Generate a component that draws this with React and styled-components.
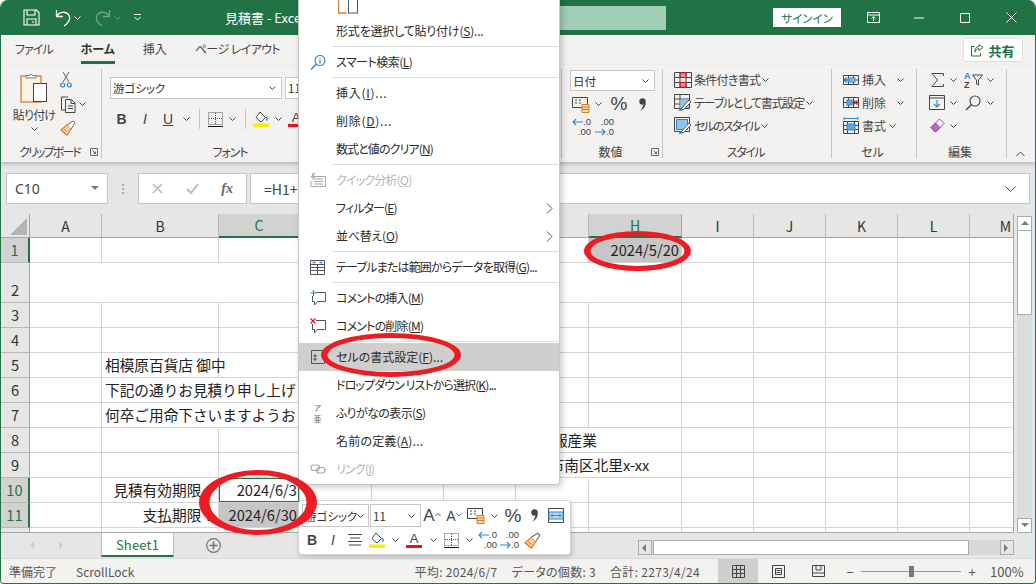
import React from 'react'
import styled, { createGlobalStyle } from 'styled-components'

const GlobalStyle = createGlobalStyle`
  html, body { margin: 0; padding: 0; background: #fff; }
  body { font-family: "Noto Sans CJK JP", "Noto Sans", sans-serif; }
  * { box-sizing: border-box; }
`

const GREEN = '#217346'
const INK = '#444'
const BLUE = '#2b88d8'
const ORANGE = '#d67f24'
const RED = '#e81123'

const Win = styled.div`
  position: relative;
  width: 1036px;
  height: 584px;
  border: 1px solid ${GREEN};
  border-top: 0;
  border-radius: 8px 8px 4px 4px;
  overflow: hidden;
  display: flex;
  flex-direction: column;
  background: #e6e6e6;
`

/* title bar */
const TitleBar = styled.div`
  flex: none;
  height: 35px;
  background: ${GREEN};
  color: #fff;
  display: flex;
  align-items: center;
  font-size: 13px;
`
const Qat = styled.div`
  display: flex;
  align-items: center;
  width: 224px;
  padding-left: 20px;
`
const QatBtn = styled.span`
  display: flex;
  align-items: center;
  justify-content: center;
  gap: 3px;
  width: ${p => p.$w}px;
  margin-left: ${p => p.$ml || 0}px;
`
const DocTitle = styled.span`
  width: 315px;
  white-space: nowrap;
`
const SearchBox = styled.div`
  width: 126px;
  height: 24px;
  background: #a0cdb5;
`
const SignIn = styled.span`
  width: 68px;
  height: 19px;
  margin-left: 107px;
  margin-right: 9px;
  background: #fff;
  color: ${GREEN};
  font-size: 11.5px;
  font-feature-settings: "palt";
  display: flex;
  align-items: center;
  justify-content: center;
`
const WinBtn = styled.span`
  width: 46px;
  display: flex;
  justify-content: center;
`

/* tab row */
const TabRow = styled.div`
  flex: none;
  height: 30px;
  background: #f3f2f1;
  display: flex;
  align-items: center;
  padding-left: 14px;
  gap: 28px;
  font-size: 12px;
  font-feature-settings: "palt";
  color: ${INK};
`
const Tab = styled.span`
  height: 28px;
  padding-top: 4px;
  white-space: nowrap;
  letter-spacing: ${p => p.$sp || 0}px;
  font-weight: ${p => (p.$on ? 700 : 400)};
  color: ${p => (p.$on ? '#333' : INK)};
  border-bottom: 3px solid ${p => (p.$on ? GREEN : 'transparent')};
`
const ShareBtn = styled.span`
  margin-left: auto;
  margin-right: 12px;
  width: 60px;
  height: 24px;
  background: #fff;
  border: 1px solid #e1dfdd;
  border-radius: 2px;
  color: ${GREEN};
  font-weight: 700;
  font-size: 13px;
  display: flex;
  align-items: center;
  justify-content: center;
  gap: 4px;
`

/* ribbon */
const Ribbon = styled.div`
  flex: none;
  position: relative;
  z-index: 1;
  height: 97px;
  background: #f3f2f1;
  box-shadow: 0 2px 4px rgba(0, 0, 0, 0.22);
  display: flex;
  font-size: 12px;
  font-feature-settings: "palt";
  color: ${INK};
`
const Group = styled.div`
  position: relative;
  flex: none;
  width: ${p => p.$w}px;
  display: flex;
  flex-direction: column;
  &::after {
    content: '';
    position: absolute;
    top: 4px;
    bottom: 4px;
    right: 0;
    width: 1px;
    background: #c8c6c4;
  }
`
const GroupBody = styled.div`
  flex: 1;
  min-height: 0;
  padding: ${p => p.$pad || '0'};
  display: flex;
  flex-direction: ${p => p.$dir || 'column'};
`
const GroupFoot = styled.div`
  flex: none;
  height: 20px;
  display: grid;
  grid-template-columns: 1fr auto 1fr;
  align-items: center;
  padding-right: 4px;
  white-space: nowrap;
`
const FootLabel = styled.span`
  grid-column: 2;
  margin-bottom: 1px;
  letter-spacing: ${p => p.$sp || 0}px;
`
const Launcher = styled.span`
  grid-column: 3;
  justify-self: end;
  display: flex;
`
const PasteCol = styled.div`
  width: 52px;
  margin-left: 7px;
  padding-top: 7px;
  display: flex;
  flex-direction: column;
  align-items: center;
  white-space: nowrap;
  line-height: 16px;
  letter-spacing: -0.8px;
  gap: 4px;
`
const SmallCol = styled.div`
  display: flex;
  flex-direction: column;
  padding-top: 3px;
`
const SmallRow = styled.div`
  height: 24px;
  display: flex;
  align-items: center;
  gap: 3px;
`
const Row = styled.div`
  display: flex;
  align-items: center;
  height: ${p => p.$h || 23}px;
  margin-top: ${p => p.$mt || 0}px;
  gap: ${p => p.$gap || 0}px;
  letter-spacing: ${p => p.$sp || 0}px;
  white-space: nowrap;
`
const Tool = styled.span`
  flex: none;
  width: ${p => p.$w}px;
  display: flex;
  align-items: center;
  justify-content: center;
`
const Letter = styled.span`
  font-family: "Liberation Sans", sans-serif;
  font-size: 14px;
  font-weight: ${p => (p.$b ? 700 : 400)};
  font-style: ${p => (p.$i ? 'italic' : 'normal')};
  text-decoration: ${p => (p.$u ? 'underline' : 'none')};
  color: #444;
`
const VSep = styled.span`
  flex: none;
  width: ${p => p.$w || 12}px;
  height: 20px;
  display: flex;
  justify-content: center;
  &::before {
    content: '';
    width: 1px;
    background: #c8c6c4;
  }
`
const Select = styled.div`
  flex: none;
  width: ${p => p.$w}px;
  height: ${p => p.$h || 22}px;
  margin-left: ${p => p.$ml || 0}px;
  background: #fff;
  border: 1px solid #c6c6c6;
  display: flex;
  align-items: center;
  justify-content: space-between;
  padding: 0 5px 0 2px;
  font-size: 11.5px;
  color: #333;
  overflow: hidden;
  white-space: nowrap;
`
const CollapseBtn = styled.span`
  margin-left: 9px;
  align-self: flex-end;
  margin-bottom: 5px;
`
const ColorA = styled.span`
  display: inline-block;
  width: 16px;
  text-align: center;
  font-family: "Liberation Sans", sans-serif;
  font-size: 13px;
  line-height: 13px;
  color: #444;
  border-bottom: 3px solid ${RED};
`
const PercentText = styled.span`
  font-family: "Liberation Sans", sans-serif;
  font-size: ${p => p.$s || 19}px;
  line-height: 20px;
  color: #444;
`
const DecBox = styled.span`
  display: flex;
  flex-direction: column;
  align-items: flex-end;
  font-family: "Liberation Sans", sans-serif;
  font-size: 9.5px;
  line-height: 10px;
  color: #444;
  width: 20px;
`
const DecLine = styled.span`
  display: flex;
  align-items: center;
`

/* formula bar */
const FormulaBand = styled.div`
  flex: none;
  height: 52px;
  padding: 11px 5px 0 5px;
  display: flex;
  align-items: flex-start;
  background: #e6e6e6;
`
const FieldBox = styled.div`
  flex: ${p => (p.$grow ? 1 : 'none')};
  width: ${p => p.$w}px;
  height: 31px;
  margin-left: ${p => p.$ml || 0}px;
  background: #fff;
  border: 1px solid #c6c6c6;
  display: flex;
  align-items: center;
  justify-content: space-between;
  padding: 0 ${p => p.$px || 8}px;
  font-size: 14px;
  color: #444;
`
const NameText = styled.span`
  font-family: "Noto Sans", sans-serif;
  font-size: 14px;
  color: #444;
`
const GripDots = styled.span`
  margin-left: 14px;
  height: 31px;
  width: 3px;
  display: flex;
  flex-direction: column;
  justify-content: center;
  gap: 2px;
  i { display: block; width: 2px; height: 2px; background: #aaa; }
`
const FxMark = styled.span`
  font-family: "Liberation Serif", serif;
  font-style: italic;
  font-weight: 700;
  font-size: 14px;
  color: #666;
`

/* sheet */
const SheetRow = styled.div`
  flex: none;
  height: 319px;
  display: flex;
`
const GridClip = styled.div`
  width: 1013px;
  height: 319px;
  overflow: hidden;
  border-right: 1px solid #a6a6a6;
  border-bottom: 1px solid #a6a6a6;
  background: #fff;
`
const Grid = styled.div`
  display: grid;
  grid-template-columns: ${p => p.$cols};
  grid-template-rows: 24px 25px 40px repeat(10, 25px);
  font-size: 14.67px;
  color: #222;
`
const Corner = styled.div`
  background: #e6e6e6;
  border-right: 1px solid #a6a6a6;
  border-bottom: 1px solid #a6a6a6;
  display: flex;
  align-items: flex-end;
  justify-content: flex-end;
  padding: 0 2px 2px 0;
`
const ColHead = styled.div`
  background: ${p => (p.$on ? '#d2d2d2' : '#e6e6e6')};
  color: ${p => (p.$on ? GREEN : '#333')};
  border-right: 1px solid ${p => (p.$on ? '#a6a6a6' : '#b8b8b8')};
  border-bottom: ${p => (p.$on ? `2px solid ${GREEN}` : '1px solid #a6a6a6')};
  display: flex;
  align-items: center;
  justify-content: center;
  font-size: 14px;
`
const RowHead = styled.div`
  background: ${p => (p.$on ? '#d2d2d2' : '#e6e6e6')};
  color: ${p => (p.$on ? GREEN : '#333')};
  border-right: ${p => (p.$on ? `2px solid ${GREEN}` : '1px solid #a6a6a6')};
  border-bottom: 1px solid #b8b8b8;
  display: flex;
  align-items: flex-end;
  justify-content: center;
  line-height: 24px;
`
const Cell = styled.div`
  display: flex;
  align-items: flex-end;
  justify-content: ${p => (p.$right ? 'flex-end' : 'flex-start')};
  padding: 0 2px 0 3px;
  line-height: 24px;
  white-space: nowrap;
  background: ${p => (p.$sel ? '#c6c6c6' : 'transparent')};
  border-right: 1px solid ${p => (p.$open ? 'transparent' : '#d4d4d4')};
  border-bottom: 1px solid #d4d4d4;
  box-shadow: ${p => (p.$active ? `inset 0 0 0 1px ${GREEN}` : 'none')};
`
const VScroll = styled.div`
  flex: 1;
  display: flex;
  flex-direction: column;
  padding: 2px 3px 0 3px;
`
const ScrollBtn = styled.div`
  flex: none;
  height: 15px;
  background: #fff;
  border: 1px solid #ababab;
  display: flex;
  align-items: center;
  justify-content: center;
`
const ScrollThumb = styled.div`
  flex: none;
  height: 84px;
  background: #fff;
  border: 1px solid #ababab;
  border-top: 0;
`
const ScrollTrack = styled.div`
  flex: 1;
  background: #dcdcdc;
`

/* sheet tabs */
const TabsBar = styled.div`
  flex: none;
  height: 25px;
  display: flex;
  align-items: flex-start;
  background: #e6e6e6;
`
const SheetNav = styled.div`
  width: 100px;
  height: 24px;
  display: flex;
  align-items: center;
  padding-left: 28px;
  gap: 23px;
`
const SheetTab = styled.div`
  width: 73px;
  height: 24px;
  background: #fff;
  border-bottom: 2px solid ${GREEN};
  border-left: 1px solid #bdbdbd;
  border-right: 1px solid #bdbdbd;
  color: ${GREEN};
  font-size: 13px;
  letter-spacing: 0.2px;
  display: flex;
  align-items: center;
  justify-content: center;
`
const AddSheet = styled.span`
  margin-left: 32px;
  margin-top: 5px;
  display: flex;
`
const HScroll = styled.div`
  margin-left: auto;
  margin-right: 21px;
  margin-top: 7px;
  width: 376px;
  height: 15px;
  display: flex;
  background: #d8d8d8;
`
const HBtn = styled.div`
  flex: none;
  width: 14px;
  background: #e6e6e6;
  border: 1px solid #ababab;
  display: flex;
  align-items: center;
  justify-content: center;
`
const HThumb = styled.div`
  width: 316px;
  margin-left: 1px;
  background: #fff;
  border: 1px solid #ababab;
`
const HTrack = styled.div`
  flex: 1;
`

/* status bar */
const StatusBar = styled.div`
  flex: none;
  height: 25px;
  background: #f3f2f1;
  border-top: 1px solid #dadada;
  display: flex;
  align-items: stretch;
  font-size: 12px;
  font-feature-settings: "palt";
  color: #555;
`
const StatusLeft = styled.div`
  display: flex;
  align-items: center;
  gap: 19px;
  padding-left: 8px;
`
const Summary = styled.div`
  margin-left: auto;
  margin-right: 18px;
  display: flex;
  align-items: center;
  gap: 14px;
  letter-spacing: 0.3px;
`
const ViewBtn = styled.span`
  width: 40px;
  background: ${p => (p.$on ? '#cfcfcf' : 'transparent')};
  display: flex;
  align-items: center;
  justify-content: center;
`
const Zoomer = styled.div`
  display: flex;
  align-items: center;
  width: 197px;
  padding-left: 5px;
  font-size: 13px;
`
const ZoomTrack = styled.div`
  position: relative;
  width: 100px;
  height: 1px;
  margin: 0 4px;
  background: #999;
`
const ZoomThumb = styled.span`
  position: absolute;
  left: 48px;
  top: -5px;
  width: 5px;
  height: 11px;
  background: #7a7a7a;
`
const ZoomSign = styled.span`
  width: 14px;
  text-align: center;
`
const ZoomValue = styled.span`
  margin-left: 11px;
`

/* context menu */
const Menu = styled.div`
  position: absolute;
  left: 297px;
  top: -20px;
  z-index: 3;
  width: 262px;
  background: #fff;
  border: 1px solid #c8c8c8;
  border-radius: 0 0 4px 4px;
  box-shadow: 2px 2px 6px rgba(0, 0, 0, 0.22);
  padding-bottom: 1px;
  font-size: 12px;
  font-feature-settings: "palt";
  color: #2b2b2b;
`
const MenuRow = styled.div`
  height: 28px;
  display: flex;
  align-items: center;
  background: ${p => (p.$hot ? '#d0cfcd' : 'transparent')};
  color: ${p => (p.$off ? '#b4b4b4' : 'inherit')};
  white-space: nowrap;
`
const MenuIcon = styled.span`
  flex: none;
  width: 37px;
  display: flex;
  justify-content: center;
`
const MenuText = styled.span`
  flex: 1;
  padding-bottom: 2px;
  letter-spacing: ${p => p.$sp || 0}px;
`
const MenuArrow = styled.span`
  margin-right: 6px;
  display: flex;
`
const MenuSep = styled.div`
  height: 3px;
  margin-left: 33px;
  margin-right: 1px;
  border-top: 1px solid #dcdcdc;
  margin-top: 1px;
  margin-bottom: -1px;
`
const PasteRow = styled.div`
  height: 36px;
  padding: 16px 0 0 39px;
  display: flex;
`
const Furigana = styled.span`
  display: flex;
  flex-direction: column;
  align-items: center;
  line-height: 11px;
  font-size: 7.5px;
  color: #666;
`

/* mini toolbar */
const Mini = styled.div`
  position: absolute;
  left: 297px;
  top: 500px;
  z-index: 3;
  width: 273px;
  height: 55px;
  background: #fff;
  border: 1px solid #d4d4d4;
  border-radius: 4px;
  box-shadow: 1px 2px 5px rgba(0, 0, 0, 0.2);
  padding: 3px 0 0 3px;
  font-feature-settings: "palt";
  color: ${INK};
`
const MiniRow = styled.div`
  display: flex;
  align-items: center;
  height: ${p => p.$h}px;
  margin-top: ${p => p.$mt || 0}px;
`

/* red hand-drawn rings on top of the page */
const RingSvg = styled.svg`
  position: absolute;
  left: 0;
  top: 0;
  z-index: 5;
  pointer-events: none;
`

const oval = (cx, cy, rx, ry) =>
  `M${cx - rx} ${cy}a${rx} ${ry} 0 1 0 ${2 * rx} 0a${rx} ${ry} 0 1 0 ${-2 * rx} 0z`

// outer + inner ellipse, so the ring is fatter on its sides like a marker stroke
const Ring = ({ cx, cy, rx, ry, ix, iy }) => (
  <path d={oval(cx, cy, rx, ry) + oval(cx, cy, ix, iy)} fill="#ed1c24" fillRule="evenodd" />
)

const Ic = ({ w = 16, h = 16, sw = 1, c = INK, children }) => (
  <svg width={w} height={h} viewBox={`0 0 ${w} ${h}`} fill="none" stroke={c} strokeWidth={sw} style={{ display: 'block', flex: 'none' }}>
    {children}
  </svg>
)

const Chev = ({ c = INK }) => (
  <Ic w={7} h={4} c={c}><path d="M.5.5l3 3 3-3" /></Ic>
)
const RightChev = () => (
  <Ic w={7} h={11} c="#555"><path d="M1 .5l5 5-5 5" /></Ic>
)
const Tri = ({ dir }) => {
  const d = { up: 'M4 1l4 4H0z', down: 'M0 1h8L4 5z', left: 'M5 0v8L1 4z', right: 'M1 0v8l4-4z' }[dir]
  return <svg width="8" height="8" viewBox="0 0 8 8" style={{ display: 'block' }}><path d={d} fill="#7a7a7a" /></svg>
}

const SaveIcon = () => (
  <Ic w={17} h={17} c="#fff" sw={1.1}>
    <path d="M1 1h12.5L16 3.5V16H1zM4 1v5h8V1M4 16v-6h9v6M10 12v2" />
  </Ic>
)
const UndoIcon = ({ c = '#fff', flip }) => (
  <svg width="16" height="18" viewBox="0 0 16 18" fill="none" stroke={c} strokeWidth="1.3" style={{ display: 'block', transform: flip ? 'scaleX(-1)' : 'none' }}>
    <path d="M1.500 1v6.500H8M1.500 7.500C4 3 10 2 13 5s2 8-4 12" />
  </svg>
)
const PasteIcon = () => (
  <Ic w={28} h={31}>
    <rect x="1" y="4" width="20" height="26" fill="#fdf3e7" stroke={ORANGE} strokeWidth="1.3" />
    <path d="M6 6V3.500h3.500a1.600 1.600 0 0 1 3 0H16V6z" fill="#fff" stroke="#777" />
    <rect x="13.500" y="11.500" width="13" height="18" fill="#fff" stroke="#444" />
  </Ic>
)
const CutIcon = () => (
  <Ic w={12} h={16} c="#666">
    <path d="M3 0l6 10M9 0L3 10" />
    <circle cx="2.700" cy="13" r="2" stroke={BLUE} strokeWidth="1.2" />
    <circle cx="9.300" cy="13" r="2" stroke={BLUE} strokeWidth="1.2" />
  </Ic>
)
const CopyIcon = () => (
  <Ic w={16} h={17}>
    <path d="M8 1H1.500v13H5" />
    <path d="M5.500 3.500h6l3.500 3.500v9.500H5.500zM11 3.500v4h4M8 10h5M8 12.500h5" fill="#f3f2f1" />
  </Ic>
)
const PainterIcon = ({ s = 16 }) => (
  <svg width={s} height={s} viewBox="0 0 16 16" fill="none" style={{ display: 'block' }}>
    <path d="M1 10l6-5 4 4-4 6z" fill="#fbd9ae" stroke={ORANGE} strokeWidth="1.2" />
    <path d="M7 5l6-4 2 2-4 6" fill="#fff" stroke="#666" />
    <path d="M4 9l3 3M2.500 11l2.500 3" stroke={ORANGE} />
  </svg>
)
const BorderIcon = () => (
  <Ic w={15} h={15} c="#555">
    <path d="M.5.500h14v12H.500z" strokeDasharray="1 1" />
    <path d="M7.500 1v11M1 6.500h13" strokeDasharray="1 1" />
    <path d="M0 14.500h15" stroke="#111" />
  </Ic>
)
const FillIcon = () => (
  <Ic w={16} h={16}>
    <path d="M7 1l5.500 5.500L8 11 3 6.500z" fill="#fff" />
    <path d="M13 6c1.500 2 1.500 3 .5 3.500" stroke={BLUE} strokeWidth="1.4" />
    <rect x="0" y="12.500" width="16" height="3.500" fill="#ffea00" stroke="none" />
  </Ic>
)
const AcctIcon = () => (
  <Ic w={18} h={17}>
    <path d="M.5 1.500h15v10H.500z" />
    <path d="M3 4h2M3 7h2M7 4h2M7 7h2" />
    <path d="M10 8.500h7v8h-7z" fill="#fbd9ae" stroke={ORANGE} />
    <path d="M10 11h7M10 13.500h7" stroke={ORANGE} />
  </Ic>
)
const CommaIcon = () => (
  <svg width="9" height="13" viewBox="0 0 9 13" style={{ display: 'block' }}>
    <circle cx="4.500" cy="3.500" r="3.200" fill="#444" />
    <path d="M7.600 4c.4 4-2 7.500-5.600 8.500 2.200-1.800 3-3.600 3-5z" fill="#444" />
  </svg>
)
const DecArrow = ({ right }) => (
  <svg width="11" height="8" viewBox="0 0 11 8" fill="none" stroke={BLUE} strokeWidth="1.1" style={{ display: 'block', transform: right ? 'scaleX(-1)' : 'none' }}>
    <path d="M11 4H1M4 1L1 4l3 3" />
  </svg>
)
const DecLess = () => (
  <DecBox>
    <DecLine><DecArrow />.0</DecLine>
    <DecLine>.00</DecLine>
  </DecBox>
)
const DecMore = () => (
  <DecBox>
    <DecLine>.00</DecLine>
    <DecLine><DecArrow right />.0</DecLine>
  </DecBox>
)
const CondIcon = () => (
  <Ic w={18} h={16} c="#444">
    <rect x="6" y="1" width="6" height="4.500" fill="#f1959b" stroke="none" />
    <rect x="6" y="10.500" width="6" height="4.500" fill="#f1959b" stroke="none" />
    <path d="M.5.500h17v15H.500zM6 .5v15M12 .5v15M.5 5.500h17M.5 10.500h17" />
    <path d="M6 1h6v4.500H6zM6 10.500h6V15H6z" stroke={RED} />
  </Ic>
)
const TableStyleIcon = () => (
  <Ic w={18} h={17} c="#444">
    <path d="M.5.500h15v14H.500zM.5 5h15M6 .5v14M.5 10h5" />
    <rect x="6.500" y="5.500" width="8.500" height="8.500" fill="#8fc3ea" stroke="none" />
    <path d="M7 15l8-9 2 2-8 8z" fill="#fff" stroke="#555" />
    <path d="M5 16.500l2-2 1.500 1.500z" fill={BLUE} stroke={BLUE} />
  </Ic>
)
const CellStyleIcon = () => (
  <Ic w={18} h={17} c="#444">
    <path d="M.5.500h15v14H.500z" />
    <rect x="2.500" y="2.500" width="11" height="10" fill="#8fc3ea" stroke="#2b88d8" />
    <path d="M7 15l8-9 2 2-8 8z" fill="#fff" stroke="#555" />
    <path d="M5 16.500l2-2 1.500 1.500z" fill={BLUE} stroke={BLUE} />
  </Ic>
)
const InsertCellIcon = () => (
  <Ic w={16} h={14}>
    <path d="M.5 2.500h15v9H.500zM.5 7h15M5.500 2.500v9M10.500 2.500v9" />
    <rect x="5" y="5" width="7" height="4" fill="#8fc3ea" stroke={BLUE} />
    <path d="M9 7H1M3.500 4.500L1 7l2.500 2.500" stroke={BLUE} strokeWidth="1.2" />
  </Ic>
)
const DeleteCellIcon = () => (
  <Ic w={16} h={14}>
    <path d="M.5 1.500h15v10H.500zM.5 6.500h15M5.500 1.500v10M10.500 1.500v10" />
    <rect x="4" y="4" width="5" height="5" fill="#5ba7e0" stroke={BLUE} />
    <path d="M10.500 4.500l4 4M14.500 4.500l-4 4" stroke={RED} strokeWidth="1.3" />
  </Ic>
)
const FormatCellIcon = () => (
  <Ic w={16} h={17}>
    <path d="M.5 4.500h15v12H.500zM.5 8.500h15M.5 12.500h15M4.500 4.500v12M11.500 4.500v12" />
    <rect x="4" y="7" width="8" height="6" fill="#5ba7e0" stroke={BLUE} />
    <path d="M1 1.500h14M1 0v3M15 0v3" stroke={BLUE} />
  </Ic>
)
const SigmaIcon = () => (
  <Ic w={13} h={14} c="#444"><path d="M12.500 3V.5H1l5.500 6.500L1 13.500h11.500V11" /></Ic>
)
const SortIcon = () => (
  <svg width="19" height="18" viewBox="0 0 19 18" fill="none" style={{ display: 'block' }}>
    <text x="0" y="8" fontFamily="Liberation Sans" fontSize="9" fontWeight="700" fill={BLUE}>A</text>
    <text x="0" y="17" fontFamily="Liberation Sans" fontSize="9" fontWeight="700" fill="#444">Z</text>
    <path d="M8.500 4h10l-4 5v5l-2-1V9z" stroke="#444" />
  </svg>
)
const FillDownIcon = () => (
  <Ic w={16} h={15}>
    <path d="M.5.500h15v14H.500zM.5 3h15" />
    <path d="M8 5v7M5 9l3 3 3-3" stroke={BLUE} strokeWidth="1.2" />
  </Ic>
)
const FindIcon = () => (
  <Ic w={16} h={16} sw={1.1}>
    <circle cx="10" cy="6" r="5" />
    <path d="M6.500 9.500L1 15" strokeWidth="1.5" />
  </Ic>
)
const EraserIcon = () => (
  <Ic w={15} h={15} c="#9a3fb3">
    <path d="M9.500 1L14 5.500 5.500 14 1 9.500z" fill="#fff" />
    <path d="M5.500 5L1 9.500 5.500 14 10 9.500z" fill="#b968cf" />
  </Ic>
)
const ShareIcon = () => (
  <Ic w={13} h={14} c={GREEN}>
    <path d="M8 1.500l4 3-4 3V5.500C6 5.500 4.500 7 4 9 3.700 6 5 3.500 8 3.500z" />
    <path d="M3.500 3.500h-3v9.500h9V10" />
  </Ic>
)
const LauncherIcon = () => (
  <Ic w={8} h={8} c="#666"><path d="M.5.500h7v7h-7zM2.500 2.500l3 3M5.500 3.500v2h-2" /></Ic>
)
const CornerMark = () => (
  <svg width="17" height="17" viewBox="0 0 17 17" style={{ display: 'block' }}><path d="M17 0v17H0z" fill="#b5b5b5" /></svg>
)

const SmartIcon = () => (
  <Ic w={16} h={15} c={BLUE} sw={1.1}>
    <circle cx="10" cy="5.500" r="5" />
    <path d="M6.500 9L1 14.500" strokeWidth="1.5" />
    <path d="M10 3v1M10 5v3.500" stroke="#555" />
  </Ic>
)
const QuickIcon = () => (
  <Ic w={16} h={15} c="#aaa">
    <path d="M3.500 3.500h12v10H1V8" />
    <path d="M4 6h9M4 8.500h9M4 11h9" />
    <path d="M3 0L.5 4.500H3L2 7.500 6 3H3.500L5 0z" fill="#aaa" stroke="none" />
  </Ic>
)
const TableIcon = () => (
  <Ic w={15} h={15} c="#555">
    <path d="M.5.500h14v14H.500z" />
    <path d="M.5 4.500h14M.5 7.500h14M.5 10.500h14M7.500 4.500v10" />
    <path d="M2.500 2.500h3M9.500 2.500h3" stroke={BLUE} strokeWidth="1.5" />
  </Ic>
)
const CommentIcon = ({ add }) => (
  <Ic w={16} h={16} c="#555">
    <path d="M6 2.500h9.500v9h-8L4.500 15V11.500h-2V6" />
    {add ? (
      <path d="M3.500 0v6M.5 3h6" stroke="#339966" strokeWidth="1.2" />
    ) : (
      <path d="M.5.500l5 5M5.500.5l-5 5" stroke={RED} strokeWidth="1.2" />
    )}
  </Ic>
)
const CellFormatIcon = () => (
  <Ic w={14} h={14} c="#555">
    <path d="M.5.500h13v13H.500z" />
    <path d="M3 5h2v1.500H3zM3 8.500h2V10H3z" />
  </Ic>
)
const LinkIcon = () => (
  <Ic w={16} h={10} c="#aaa" sw={1.2}>
    <rect x="1" y="1" width="8.500" height="5.500" rx="2.700" />
    <rect x="6.500" y="3.500" width="8.500" height="5.500" rx="2.700" />
  </Ic>
)
const AlignIcon = () => (
  <Ic w={14} h={12} c="#444"><path d="M0 .5h14M2 4h10M0 7.500h14M1 11h12" /></Ic>
)
const WrapIcon = () => (
  <Ic w={16} h={15} c="#444">
    <path d="M.5 .5h15v14H.500z" />
    <rect x="1" y="4" width="14" height="7" fill="#bcdcf5" stroke={BLUE} />
    <path d="M3 7.500h10M5 5.500l-2 2 2 2M11 5.500l2 2-2 2" stroke={BLUE} />
  </Ic>
)
const GrowFont = ({ up }) => (
  <Row $h={20}>
    <PercentText $s={up ? 17 : 14}>A</PercentText>
    <Ic w={6} h={8} c={up ? INK : BLUE}><path d={up ? 'M.5 4L3 1.500 5.500 4' : 'M.5 1.500L3 4 5.500 1.500'} /></Ic>
  </Row>
)

const COLS = ['A', 'B', 'C', 'D', 'E', 'F', 'G', 'H', 'I', 'J', 'K', 'L', 'M']
const WIDTHS = [72, 117, 81, 72, 72, 72, 73, 93, 72, 72, 72, 72, 72]
const ROWS = [1, 2, 3, 4, 5, 6, 7, 8, 9, 10, 11, 12]

const CELLS = {
  H1: { text: '2024/5/20', right: true, sel: true },
  B5: { text: '相模原百貨店 御中' },
  B6: { text: '下記の通りお見積り申し上げ' },
  B7: { text: '何卒ご用命下さいますようお' },
  F8: { text: '株式会社 相模情報産業' },
  F9: { text: '神奈川県相模原市南区北里x-xx' },
  B10: { text: '見積有効期限：', right: true },
  B11: { text: '支払期限：', right: true },
  C10: { text: '2024/6/3', right: true, active: true },
  C11: { text: '2024/6/30', right: true, sel: true },
}
// cells whose right gridline is hidden (merged row 2, overflowing text)
const OPEN = ['A2', 'B2', 'C2', 'D2', 'E2', 'F2', 'G2', 'B6', 'B7', 'C6', 'C7', 'F8', 'G8', 'F9', 'G9']
const HOT_COLS = ['C', 'H']
const HOT_ROWS = [1, 10, 11]

const M = ({ label, k, tail = '', sp }) => (
  <MenuText $sp={sp}>{label}(<u>{k}</u>){tail}</MenuText>
)

function ContextMenu() {
  return (
    <Menu>
      <PasteRow>
        <Ic w={20} h={17}>
          <path d="M.5 0v16h8" stroke={ORANGE} strokeWidth="1.3" />
          <rect x="10.500" y="1" width="9" height="15" fill="#fff" stroke="#555" />
        </Ic>
      </PasteRow>
      <MenuRow><MenuIcon /><M label="形式を選択して貼り付け" k="S" tail="..." sp={-0.2} /></MenuRow>
      <MenuSep />
      <MenuRow><MenuIcon><SmartIcon /></MenuIcon><M label="スマート検索" k="L" sp={-0.5} /></MenuRow>
      <MenuSep />
      <MenuRow><MenuIcon /><M label="挿入" k="I" tail="..." sp={0.7} /></MenuRow>
      <MenuRow><MenuIcon /><M label="削除" k="D" tail="..." sp={0.7} /></MenuRow>
      <MenuRow><MenuIcon /><M label="数式と値のクリア" k="N" sp={-0.9} /></MenuRow>
      <MenuSep />
      <MenuRow $off><MenuIcon><QuickIcon /></MenuIcon><M label="クイック分析" k="Q" sp={-0.8} /></MenuRow>
      <MenuRow><MenuIcon /><M label="フィルター" k="E" sp={-0.9} /><MenuArrow><RightChev /></MenuArrow></MenuRow>
      <MenuRow><MenuIcon /><M label="並べ替え" k="O" sp={-0.25} /><MenuArrow><RightChev /></MenuArrow></MenuRow>
      <MenuSep />
      <MenuRow><MenuIcon><TableIcon /></MenuIcon><M label="テーブルまたは範囲からデータを取得" k="G" tail="..." sp={-0.8} /></MenuRow>
      <MenuSep />
      <MenuRow><MenuIcon><CommentIcon add /></MenuIcon><M label="コメントの挿入" k="M" sp={-0.8} /></MenuRow>
      <MenuRow><MenuIcon><CommentIcon /></MenuIcon><M label="コメントの削除" k="M" sp={-0.8} /></MenuRow>
      <MenuSep />
      <MenuRow $hot><MenuIcon><CellFormatIcon /></MenuIcon><M label="セルの書式設定" k="F" tail="..." /></MenuRow>
      <MenuRow><MenuIcon /><M label="ドロップダウン リストから選択" k="K" tail="..." sp={-0.9} /></MenuRow>
      <MenuRow><MenuIcon><Furigana><span>ア</span><span>亜</span></Furigana></MenuIcon><M label="ふりがなの表示" k="S" sp={-0.6} /></MenuRow>
      <MenuRow><MenuIcon /><M label="名前の定義" k="A" tail="..." sp={0.2} /></MenuRow>
      <MenuRow $off><MenuIcon><LinkIcon /></MenuIcon><M label="リンク" k="I" sp={-0.8} /></MenuRow>
    </Menu>
  )
}

function MiniToolbar() {
  return (
    <Mini>
      <MiniRow $h={23}>
        <Select $w={67} $h={23}>游ゴシック<Chev /></Select>
        <Select $w={51} $h={23} $ml={1}>11<Chev /></Select>
        <Tool $w={22}><GrowFont up /></Tool>
        <Tool $w={22}><GrowFont /></Tool>
        <Tool $w={22}><AcctIcon /></Tool>
        <Tool $w={14}><Chev /></Tool>
        <Tool $w={24}><PercentText>%</PercentText></Tool>
        <Tool $w={18}><CommaIcon /></Tool>
        <Tool $w={26}><WrapIcon /></Tool>
      </MiniRow>
      <MiniRow $h={22} $mt={2}>
        <Tool $w={20}><Letter $b>B</Letter></Tool>
        <Tool $w={22}><Letter $i>I</Letter></Tool>
        <Tool $w={22}><AlignIcon /></Tool>
        <Tool $w={22}><FillIcon /></Tool>
        <Tool $w={14}><Chev /></Tool>
        <Tool $w={24}><ColorA>A</ColorA></Tool>
        <Tool $w={14}><Chev /></Tool>
        <Tool $w={22}><BorderIcon /></Tool>
        <Tool $w={14}><Chev /></Tool>
        <Tool $w={22}><DecLess /></Tool>
        <Tool $w={22}><DecMore /></Tool>
        <Tool $w={24}><PainterIcon s={17} /></Tool>
      </MiniRow>
    </Mini>
  )
}

function RibbonPane() {
  return (
    <Ribbon>
      <Group $w={101}>
        <GroupBody $dir="row">
          <PasteCol>
            <PasteIcon />
            <span>貼り付け</span>
            <Chev />
          </PasteCol>
          <SmallCol>
            <SmallRow><CutIcon /></SmallRow>
            <SmallRow><CopyIcon /><Chev /></SmallRow>
            <SmallRow><PainterIcon /></SmallRow>
          </SmallCol>
        </GroupBody>
        <GroupFoot>
          <FootLabel $sp={-1.9}>クリップボード</FootLabel>
          <Launcher><LauncherIcon /></Launcher>
        </GroupFoot>
      </Group>

      <Group $w={260}>
        <GroupBody $pad="12px 0 0 8px">
          <Row $h={22}>
            <Select $w={172}>游ゴシック<Chev /></Select>
            <Select $w={40} $ml={3}>11<Chev /></Select>
          </Row>
          <Row $h={24} $mt={8}>
            <Tool $w={23}><Letter $b>B</Letter></Tool>
            <Tool $w={24}><Letter $i>I</Letter></Tool>
            <Tool $w={22}><Letter $u>U</Letter></Tool>
            <Tool $w={14}><Chev /></Tool>
            <VSep />
            <Tool $w={20}><BorderIcon /></Tool>
            <Tool $w={14}><Chev /></Tool>
            <VSep />
            <Tool $w={20}><FillIcon /></Tool>
            <Tool $w={14}><Chev /></Tool>
            <Tool $w={22}><ColorA>A</ColorA></Tool>
          </Row>
        </GroupBody>
        <GroupFoot><FootLabel $sp={-1}>フォント</FootLabel></GroupFoot>
      </Group>

      <Group $w={200}>
        <GroupBody />
        <GroupFoot><FootLabel>配置</FootLabel></GroupFoot>
      </Group>

      <Group $w={101}>
        <GroupBody $pad="5px 0 0 8px">
          <Select $w={85} $h={21}>日付<Chev /></Select>
          <Row $h={20} $mt={3}>
            <Tool $w={22}><AcctIcon /></Tool>
            <Tool $w={12}><Chev /></Tool>
            <Tool $w={30}><PercentText>%</PercentText></Tool>
            <Tool $w={16}><CommaIcon /></Tool>
          </Row>
          <Row $h={20} $mt={3}>
            <Tool $w={22}><DecLess /></Tool>
            <Tool $w={24}><DecMore /></Tool>
          </Row>
        </GroupBody>
        <GroupFoot>
          <FootLabel>数値</FootLabel>
          <Launcher><LauncherIcon /></Launcher>
        </GroupFoot>
      </Group>

      <Group $w={169}>
        <GroupBody $pad="3px 0 0 11px">
          <Row $gap={2} $sp={-0.7}><CondIcon />条件付き書式 <Chev /></Row>
          <Row $gap={2} $sp={-1.2}><TableStyleIcon />テーブルとして書式設定 <Chev /></Row>
          <Row $gap={2} $sp={-1.8}><CellStyleIcon />セルのスタイル <Chev /></Row>
        </GroupBody>
        <GroupFoot><FootLabel $sp={-1.5}>スタイル</FootLabel></GroupFoot>
      </Group>

      <Group $w={85}>
        <GroupBody $pad="3px 0 0 11px">
          <Row $gap={3}><InsertCellIcon />挿入<Tool $w={22}><Chev /></Tool></Row>
          <Row $gap={3}><DeleteCellIcon />削除<Tool $w={22}><Chev /></Tool></Row>
          <Row $gap={3}><FormatCellIcon />書式<Chev /></Row>
        </GroupBody>
        <GroupFoot><FootLabel>セル</FootLabel></GroupFoot>
      </Group>

      <Group $w={90}>
        <GroupBody $pad="3px 0 0 12px">
          <Row>
            <Tool $w={16}><SigmaIcon /></Tool>
            <Tool $w={16}><Chev /></Tool>
            <Tool $w={24}><SortIcon /></Tool>
            <Tool $w={10}><Chev /></Tool>
          </Row>
          <Row>
            <Tool $w={16}><FillDownIcon /></Tool>
            <Tool $w={16}><Chev /></Tool>
            <Tool $w={24}><FindIcon /></Tool>
            <Tool $w={10}><Chev /></Tool>
          </Row>
          <Row>
            <Tool $w={16}><EraserIcon /></Tool>
            <Tool $w={16}><Chev /></Tool>
          </Row>
        </GroupBody>
        <GroupFoot><FootLabel>編集</FootLabel></GroupFoot>
      </Group>

      <CollapseBtn>
        <Ic w={9} h={6} c="#444"><path d="M.5 5L4.500 1l4 4" /></Ic>
      </CollapseBtn>
    </Ribbon>
  )
}

function SheetGrid() {
  const template = ['29px', ...WIDTHS.map(w => `${w}px`)].join(' ')
  return (
    <GridClip>
      <Grid $cols={template}>
        <Corner><CornerMark /></Corner>
        {COLS.map(c => (
          <ColHead key={c} $on={HOT_COLS.includes(c)}>{c}</ColHead>
        ))}
        {ROWS.map(r => (
          <React.Fragment key={r}>
            {/* row 12 is only a sliver at the bottom edge, its number is out of view */}
            <RowHead $on={HOT_ROWS.includes(r)}>{r < 12 ? r : ''}</RowHead>
            {COLS.map(c => {
              const id = `${c}${r}`
              const info = CELLS[id] || {}
              return (
                <Cell
                  key={id}
                  $right={info.right}
                  $sel={info.sel}
                  $active={info.active}
                  $open={OPEN.includes(id)}
                >
                  {info.text}
                </Cell>
              )
            })}
          </React.Fragment>
        ))}
      </Grid>
    </GridClip>
  )
}

export default function App() {
  return (
    <>
      <GlobalStyle />
      <Win>
        <TitleBar>
          <Qat>
            <QatBtn $w={20}><SaveIcon /></QatBtn>
            <QatBtn $w={36} $ml={9}><UndoIcon /><Chev c="#fff" /></QatBtn>
            <QatBtn $w={36} $ml={4}><UndoIcon c="#6fa48a" flip /><Chev c="#6fa48a" /></QatBtn>
            <QatBtn $w={22}>
              <Ic w={7} h={7} c="#fff"><path d="M0 .5h7M.5 3l3 3 3-3" /></Ic>
            </QatBtn>
          </Qat>
          <DocTitle>見積書 - Excel</DocTitle>
          <SearchBox />
          <SignIn>サインイン</SignIn>
          <WinBtn>
            <Ic w={13} h={12} c="#fff"><path d="M.5.500h12v10H.500zM.5 3h12M6.500 9V4.500M4.500 6.500l2-2 2 2" /></Ic>
          </WinBtn>
          <WinBtn>
            <Ic w={10} h={2} c="#fff"><path d="M0 1h10" /></Ic>
          </WinBtn>
          <WinBtn>
            <Ic w={10} h={10} c="#fff"><path d="M.5.500h9v9h-9z" /></Ic>
          </WinBtn>
          <WinBtn>
            <Ic w={11} h={11} c="#fff"><path d="M.5.500l10 10M10.500.5l-10 10" /></Ic>
          </WinBtn>
        </TitleBar>

        <TabRow>
          <Tab $sp={-1}>ファイル</Tab>
          <Tab $on>ホーム</Tab>
          <Tab>挿入</Tab>
          <Tab $sp={-0.6}>ページ レイアウト</Tab>
          <ShareBtn><ShareIcon />共有</ShareBtn>
        </TabRow>

        <RibbonPane />

        <FormulaBand>
          <FieldBox $w={102}>
            <NameText>C10</NameText>
            <Tri dir="down" />
          </FieldBox>
          <GripDots><i /><i /><i /></GripDots>
          <FieldBox $w={109} $ml={13} $px={13}>
            <Ic w={11} h={11} c="#bbb" sw={1.6}><path d="M1 1l9 9M10 1l-9 9" /></Ic>
            <Ic w={13} h={11} c="#bbb" sw={2}><path d="M1 6l4 4 7-9" /></Ic>
            <FxMark>fx</FxMark>
          </FieldBox>
          <FieldBox $grow $ml={3} $px={13}>
            <span>=H1+14</span>
            <Ic w={11} h={6} c="#444"><path d="M.5.500l5 5 5-5" /></Ic>
          </FieldBox>
        </FormulaBand>

        <SheetRow>
          <SheetGrid />
          <VScroll>
            <ScrollBtn><Tri dir="up" /></ScrollBtn>
            <ScrollThumb />
            <ScrollTrack />
            <ScrollBtn><Tri dir="down" /></ScrollBtn>
          </VScroll>
        </SheetRow>

        <TabsBar>
          <SheetNav>
            <Ic w={6} h={8} c="#ccc"><path d="M5 0v8L1 4z" fill="#ccc" stroke="none" /></Ic>
            <Ic w={6} h={8} c="#ccc"><path d="M1 0v8l4-4z" fill="#ccc" stroke="none" /></Ic>
          </SheetNav>
          <SheetTab>Sheet1</SheetTab>
          <AddSheet>
            <Ic w={15} h={15} c="#777" sw={1.2}>
              <circle cx="7.500" cy="7.500" r="6.800" />
              <path d="M7.500 3.500v8M3.500 7.500h8" strokeWidth="1.6" />
            </Ic>
          </AddSheet>
          <HScroll>
            <HBtn><Tri dir="left" /></HBtn>
            <HThumb />
            <HTrack />
            <HBtn><Tri dir="right" /></HBtn>
          </HScroll>
        </TabsBar>

        <StatusBar>
          <StatusLeft>
            <span>準備完了</span>
            <span>ScrollLock</span>
          </StatusLeft>
          <Summary>
            <span>平均: 2024/6/7</span>
            <span>データの個数: 3</span>
            <span>合計: 2273/4/24</span>
          </Summary>
          <ViewBtn $on>
            <Ic w={13} h={13} c="#444"><path d="M.5.500h12v12H.500zM4.500.5v12M8.500.5v12M.5 4.500h12M.5 8.500h12" /></Ic>
          </ViewBtn>
          <ViewBtn>
            <Ic w={13} h={13} c="#444"><path d="M.5.500h12v12H.500zM3.500 3.500h6v6h-6zM4.500 5.500h4M4.500 7.500h4" /></Ic>
          </ViewBtn>
          <ViewBtn>
            <Ic w={13} h={12} c="#444"><path d="M.5.500h12v11H.500zM.5 8h12M4 .5V5h5V.5" /></Ic>
          </ViewBtn>
          <Zoomer>
            <ZoomSign>−</ZoomSign>
            <ZoomTrack><ZoomThumb /></ZoomTrack>
            <ZoomSign>+</ZoomSign>
            <ZoomValue>100%</ZoomValue>
          </Zoomer>
        </StatusBar>

        <ContextMenu />
        <MiniToolbar />

        <RingSvg width="1034" height="584">
          <Ring cx={636.5} cy={251} rx={53.5} ry={20} ix={47} iy={15} />
          <Ring cx={390} cy={355} rx={70} ry={22} ix={63.5} iy={17} />
          <Ring cx={257} cy={502.5} rx={59} ry={32.5} ix={48.5} iy={27.5} />
        </RingSvg>
      </Win>
    </>
  )
}
